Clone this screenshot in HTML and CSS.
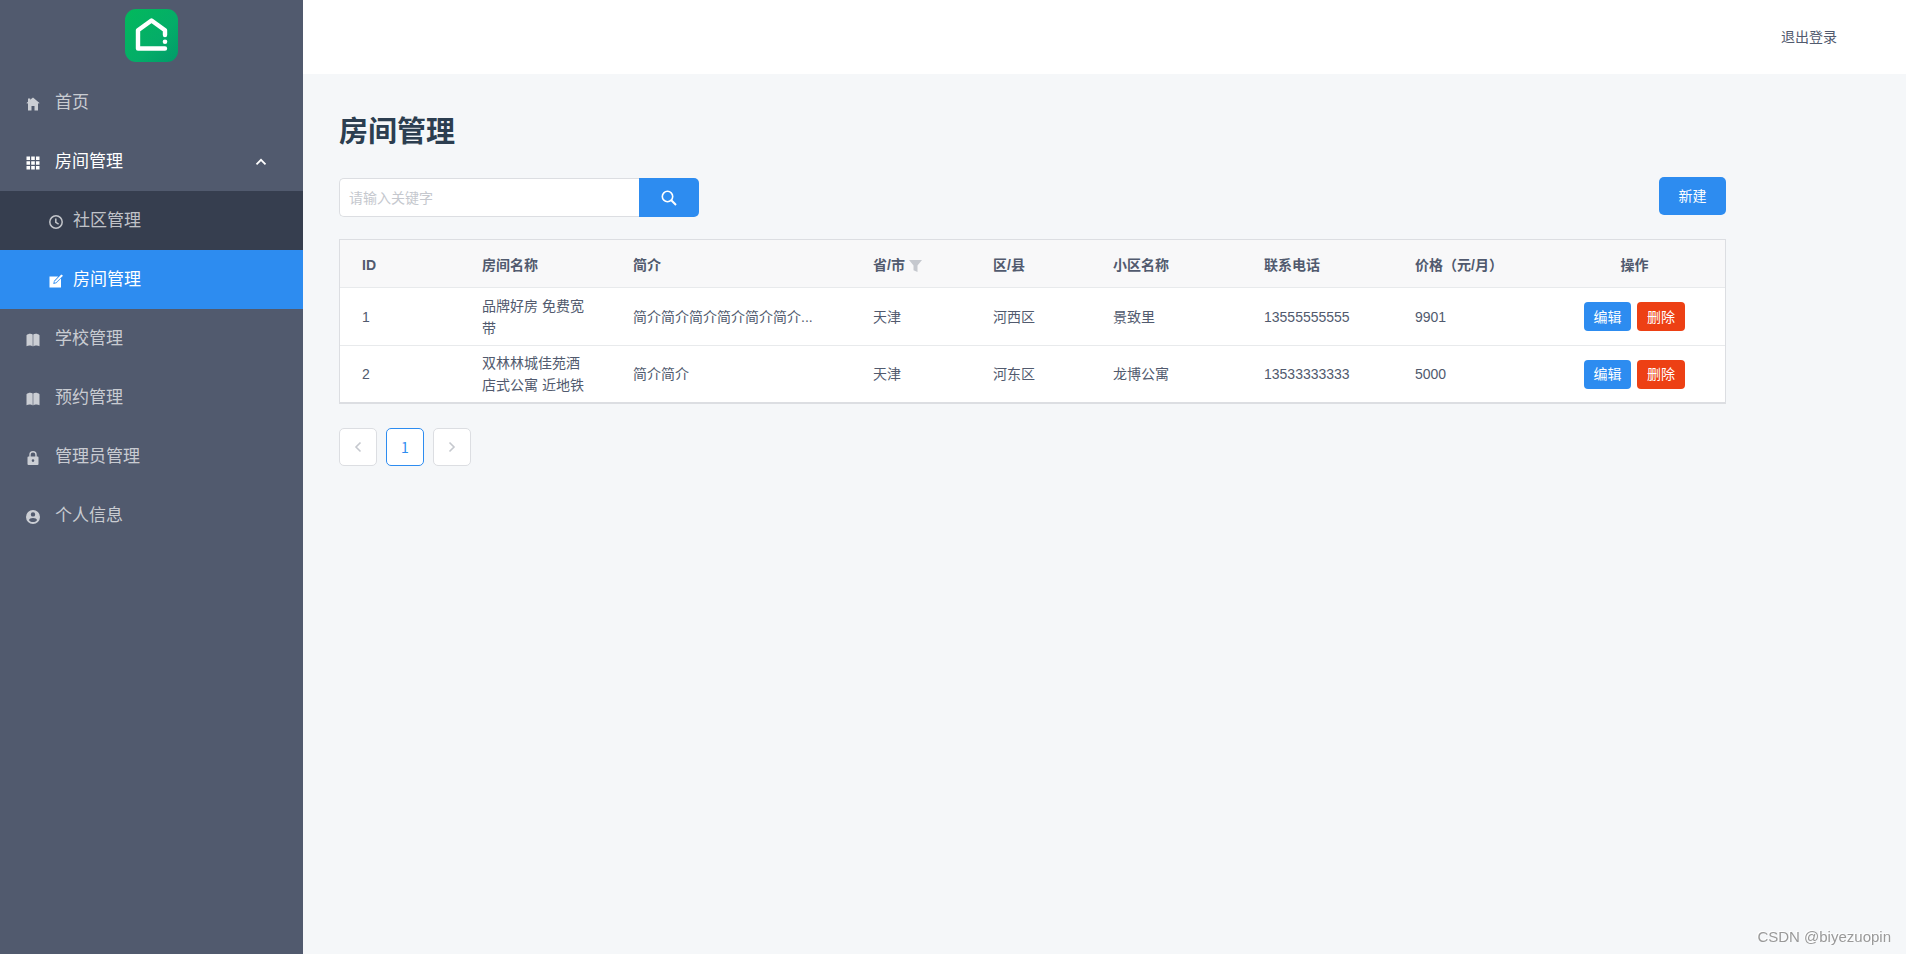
FILE: index.html
```html
<!DOCTYPE html>
<html lang="zh-CN">
<head>
<meta charset="utf-8">
<title>房间管理</title>
<link rel="stylesheet" href="styles.css">
</head>
<body>
<div class="layout">
  <aside class="sidebar">
    <a class="logo" href="#" aria-label="首页">
      <svg viewBox="0 0 53 53" width="53" height="53" aria-hidden="true">
        <defs><linearGradient id="green" x1="0" y1="0" x2="1" y2="1"><stop offset="0" stop-color="#02b95c"/><stop offset=".6" stop-color="#04ad68"/><stop offset="1" stop-color="#019a69"/></linearGradient></defs>
        <rect width="53" height="53" rx="11" fill="url(#green)"/>
        <path d="M40 26v-4.700L26.500 11.500 13 21.300v18.200h27" fill="none" stroke="#fff" stroke-width="4.400" stroke-linecap="round" stroke-linejoin="round"/>
        <circle cx="40" cy="32.700" r="2.300" fill="#fff"/>
      </svg>
    </a>
    <nav class="menu">
      <a class="item" href="#">
        <svg class="icon" viewBox="0 0 14 14"><path fill="currentColor" d="M7 .5 4.200 2.800V1.500H2v3.200L.5 6l.6.800.9-.7v7.400h3.500V9h3v4.500H12V6.100l.9.700.6-.8z"/></svg>
        <span>首页</span>
      </a>
      <a class="item open" href="#">
        <svg class="icon" viewBox="0 0 14 14"><path fill="currentColor" d="M.5.500h3.500V4H.5zm4.700 0h3.600V4H5.200zM10 .5h3.500V4H10zM.5 5.200H4v3.600H.5zm4.700 0h3.600v3.600H5.200zm4.800 0h3.500v3.600H10zM.5 10H4v3.500H.5zm4.700 0h3.600v3.500H5.200zm4.800 0h3.500v3.500H10z"/></svg>
        <span>房间管理</span>
        <svg class="arrow" viewBox="0 0 12 12"><path d="m1.500 8.300 4.500-4.500 4.500 4.500" fill="none" stroke="currentColor" stroke-width="1.800"/></svg>
      </a>
      <a class="item sub" href="#">
        <svg class="icon" viewBox="0 0 14 14"><g fill="none" stroke="currentColor" stroke-width="1.500"><circle cx="7" cy="7" r="6.200"/><path d="M6.800 3.500v3.900l2.800 1.800"/></g></svg>
        <span>社区管理</span>
      </a>
      <a class="item sub active" href="#">
        <svg class="icon" viewBox="0 0 14 14"><path fill="currentColor" d="M.5 2.500h8.700L4.900 7l-.6 2.900 2.900-.6 4.800-4.800V13.500H.5z"/><path fill="currentColor" d="M12.300.5 14 1.700 7 8.500l-1.500.3.300-1.500z"/></svg>
        <span>房间管理</span>
      </a>
      <a class="item" href="#">
        <svg class="icon" viewBox="0 0 14 14"><path fill="currentColor" d="M6.700 1.500v12C5.500 12.300 2.500 12 .5 13.200V2.200C2 .3 5.500.2 6.700 1.500zm.6 0C8.500.2 12 .3 13.500 2.200v11c-2-1.200-5-.9-6.200.3z"/></svg>
        <span>学校管理</span>
      </a>
      <a class="item" href="#">
        <svg class="icon" viewBox="0 0 14 14"><path fill="currentColor" d="M6.700 1.500v12C5.500 12.300 2.500 12 .5 13.200V2.200C2 .3 5.500.2 6.700 1.500zm.6 0C8.500.2 12 .3 13.500 2.200v11c-2-1.200-5-.9-6.200.3z"/></svg>
        <span>预约管理</span>
      </a>
      <a class="item" href="#">
        <svg class="icon" viewBox="0 0 14 14"><path fill="currentColor" fill-rule="evenodd" d="M3.300 5.500V3.700a3.700 3.700 0 0 1 7.400 0v1.800h.8q1 0 1 1v6.500q0 1-1 1h-9q-1 0-1-1V6.500q0-1 1-1zm1.400 0h4.600V3.700a2.300 2.300 0 0 0-4.600 0zM7 8.300A1.300 1.300 0 1 0 7 10.900 1.300 1.300 0 0 0 7 8.300z"/></svg>
        <span>管理员管理</span>
      </a>
      <a class="item" href="#">
        <svg class="icon" viewBox="0 0 14 14"><path fill="currentColor" fill-rule="evenodd" d="M7 0a7 7 0 1 0 0 14A7 7 0 0 0 7 0zm0 2.200a2.200 2.200 0 1 1 0 4.400 2.200 2.200 0 0 1 0-4.400zM7 8c2 0 4 .8 4 2.200-1 1.200-2.400 1.900-4 1.900s-3-.7-4-1.900C3 8.800 5 8 7 8z"/></svg>
        <span>个人信息</span>
      </a>
    </nav>
  </aside>

  <div class="page">
    <header class="topbar"><a href="#">退出登录</a></header>
    <main class="content">
      <h1>房间管理</h1>
      <div class="toolbar">
        <form class="search">
          <input type="text" aria-label="关键字" placeholder="请输入关键字">
          <button type="button" aria-label="搜索">
            <svg viewBox="0 0 16 16" width="16" height="16"><g fill="none" stroke="currentColor"><circle cx="6.500" cy="6.500" r="5.200" stroke-width="1.600"/><path d="m10.300 10.300 4.700 4.700" stroke-width="2"/></g></svg>
          </button>
        </form>
        <button class="create" type="button">新建</button>
      </div>
      <table class="rooms">
        <colgroup>
          <col class="narrow"><col class="wide"><col><col class="narrow"><col class="narrow"><col class="wide"><col class="wide"><col class="wide"><col class="ops">
        </colgroup>
        <thead>
          <tr>
            <th>ID</th><th>房间名称</th><th>简介</th>
            <th>省/市 <svg class="filter" viewBox="0 0 13 12"><path fill="currentColor" d="M0 0h13L8.500 5.500V12l-4-1.800V5.500z"/></svg></th>
            <th>区/县</th><th>小区名称</th><th>联系电话</th><th>价格（元/月）</th><th class="center">操作</th>
          </tr>
        </thead>
        <tbody>
          <tr>
            <td>1</td><td>品牌好房 免费宽带</td><td>简介简介简介简介简介简介...</td><td>天津</td><td>河西区</td><td>景致里</td><td>13555555555</td><td>9901</td>
            <td><div class="actions"><button class="edit" type="button">编辑</button><button class="delete" type="button">删除</button></div></td>
          </tr>
          <tr>
            <td>2</td><td>双林林城佳苑酒店式公寓 近地铁</td><td>简介简介</td><td>天津</td><td>河东区</td><td>龙博公寓</td><td>13533333333</td><td>5000</td>
            <td><div class="actions"><button class="edit" type="button">编辑</button><button class="delete" type="button">删除</button></div></td>
          </tr>
        </tbody>
      </table>
      <nav class="pager" aria-label="分页">
        <button type="button" aria-label="上一页"><svg viewBox="0 0 12 12"><path d="M8.500 1.500 4 6l4.500 4.500" fill="none" stroke="currentColor" stroke-width="1.600"/></svg></button>
        <button class="current" type="button">1</button>
        <button type="button" aria-label="下一页"><svg viewBox="0 0 12 12"><path d="M3.500 1.500 8 6l-4.500 4.500" fill="none" stroke="currentColor" stroke-width="1.600"/></svg></button>
      </nav>
    </main>
  </div>
</div>
<div class="watermark">CSDN @biyezuopin</div>
</body>
</html>
```
FILE: styles.css
```css
* {
  box-sizing: border-box;
}

body {
  margin: 0;
  background: #f5f7f9;
  color: #515a6e;
  font: 14px/22px "Liberation Sans", "Noto Sans CJK SC", sans-serif;
}

a {
  color: inherit;
  text-decoration: none;
}

button,
input {
  font: inherit;
}

button {
  padding: 0;
  border: 0;
  cursor: pointer;
}

.layout {
  display: flex;
  min-height: 100vh;
}

/* Sidebar */
.sidebar {
  flex: 0 0 303px;
  background: #515a6e;
}

.logo {
  display: flex;
  justify-content: center;
  padding: 9px 0 11px;
}

.item {
  display: flex;
  align-items: center;
  height: 59px;
  padding: 0 36px 0 26px;
  gap: 15px;
  color: rgba(255, 255, 255, 0.7);
  font-size: 17px;
}

.icon {
  width: 14px;
  height: 14px;
  margin-top: 3px;
}

.arrow {
  width: 12px;
  height: 12px;
  margin-left: auto;
}

.open {
  color: #fff;
}

.sub {
  padding-left: 49px;
  gap: 10px;
  background: #363e4f;
}

.active {
  background: #2d8cf0;
  color: #fff;
}

/* Main area */
.page {
  flex: 1;
  min-width: 0;
}

.topbar {
  display: flex;
  align-items: center;
  justify-content: flex-end;
  height: 74px;
  padding-right: 69px;
  background: #fff;
}

.content {
  padding: 37px 180px 36px 36px;
}

h1 {
  margin: 0 0 23px;
  color: #2c3e50;
  font-size: 29px;
  line-height: 43px;
}

.toolbar {
  display: flex;
  align-items: flex-start;
  justify-content: space-between;
  margin-bottom: 22px;
}

.search {
  display: flex;
  width: 360px;
  height: 39px;
  margin-top: 1px;
}

.search input {
  flex: 1;
  min-width: 0;
  padding: 0 9px;
  border: 1px solid #dcdee2;
  border-right: 0;
  border-radius: 5px 0 0 5px;
  background: #fff;
}

.search input::placeholder {
  color: #c5c8ce;
}

.search button {
  display: grid;
  place-items: center;
  width: 60px;
  border-radius: 0 5px 5px 0;
  background: #2d8cf0;
  color: #fff;
}

.create {
  width: 67px;
  height: 38px;
  border-radius: 5px;
  background: #2d8cf0;
  color: #fff;
}

/* Table */
.rooms {
  width: 100%;
  table-layout: fixed;
  border: 1px solid #dcdee2;
  border-bottom-width: 2px;
  border-spacing: 0;
  background: #fff;
}

.narrow {
  width: 120px;
}

.wide {
  width: 151px;
}

.ops {
  width: 181px;
}

th,
td {
  padding: 0 22px;
  text-align: left;
}

th {
  height: 48px;
  padding-top: 2px;
  border-bottom: 1px solid #e8eaec;
  background: #f8f8f9;
  white-space: nowrap;
}

td {
  height: 57px;
  border-bottom: 1px solid #e8eaec;
}

tbody tr:first-child td {
  height: 58px;
}

tbody tr:last-child td {
  height: 56px;
  border-bottom: 0;
}

.center {
  text-align: center;
}

.filter {
  width: 13px;
  height: 12px;
  color: #c5c8ce;
  vertical-align: -2px;
}

.actions {
  display: flex;
  justify-content: center;
  gap: 6px;
}

.actions button {
  width: 48px;
  height: 29px;
  border-radius: 4px;
  color: #fff;
}

.actions .edit {
  width: 47px;
  background: #2d8cf0;
}

.delete {
  background: #ed4014;
}

/* Pagination */
.pager {
  display: flex;
  gap: 9px;
  margin-top: 24px;
}

.pager button {
  display: grid;
  place-items: center;
  width: 38px;
  height: 38px;
  border: 1px solid #dcdee2;
  border-radius: 5px;
  background: #fff;
  color: #c5c8ce;
}

.pager svg {
  width: 12px;
  height: 12px;
}

.pager .current {
  border-color: #2d8cf0;
  color: #2d8cf0;
  font-family: "Noto Sans CJK SC", sans-serif;
}

.watermark {
  position: fixed;
  right: 15px;
  bottom: 6px;
  color: #999;
  font-size: 15px;
  text-shadow: -1px -1px 0 #fff;
}
```
